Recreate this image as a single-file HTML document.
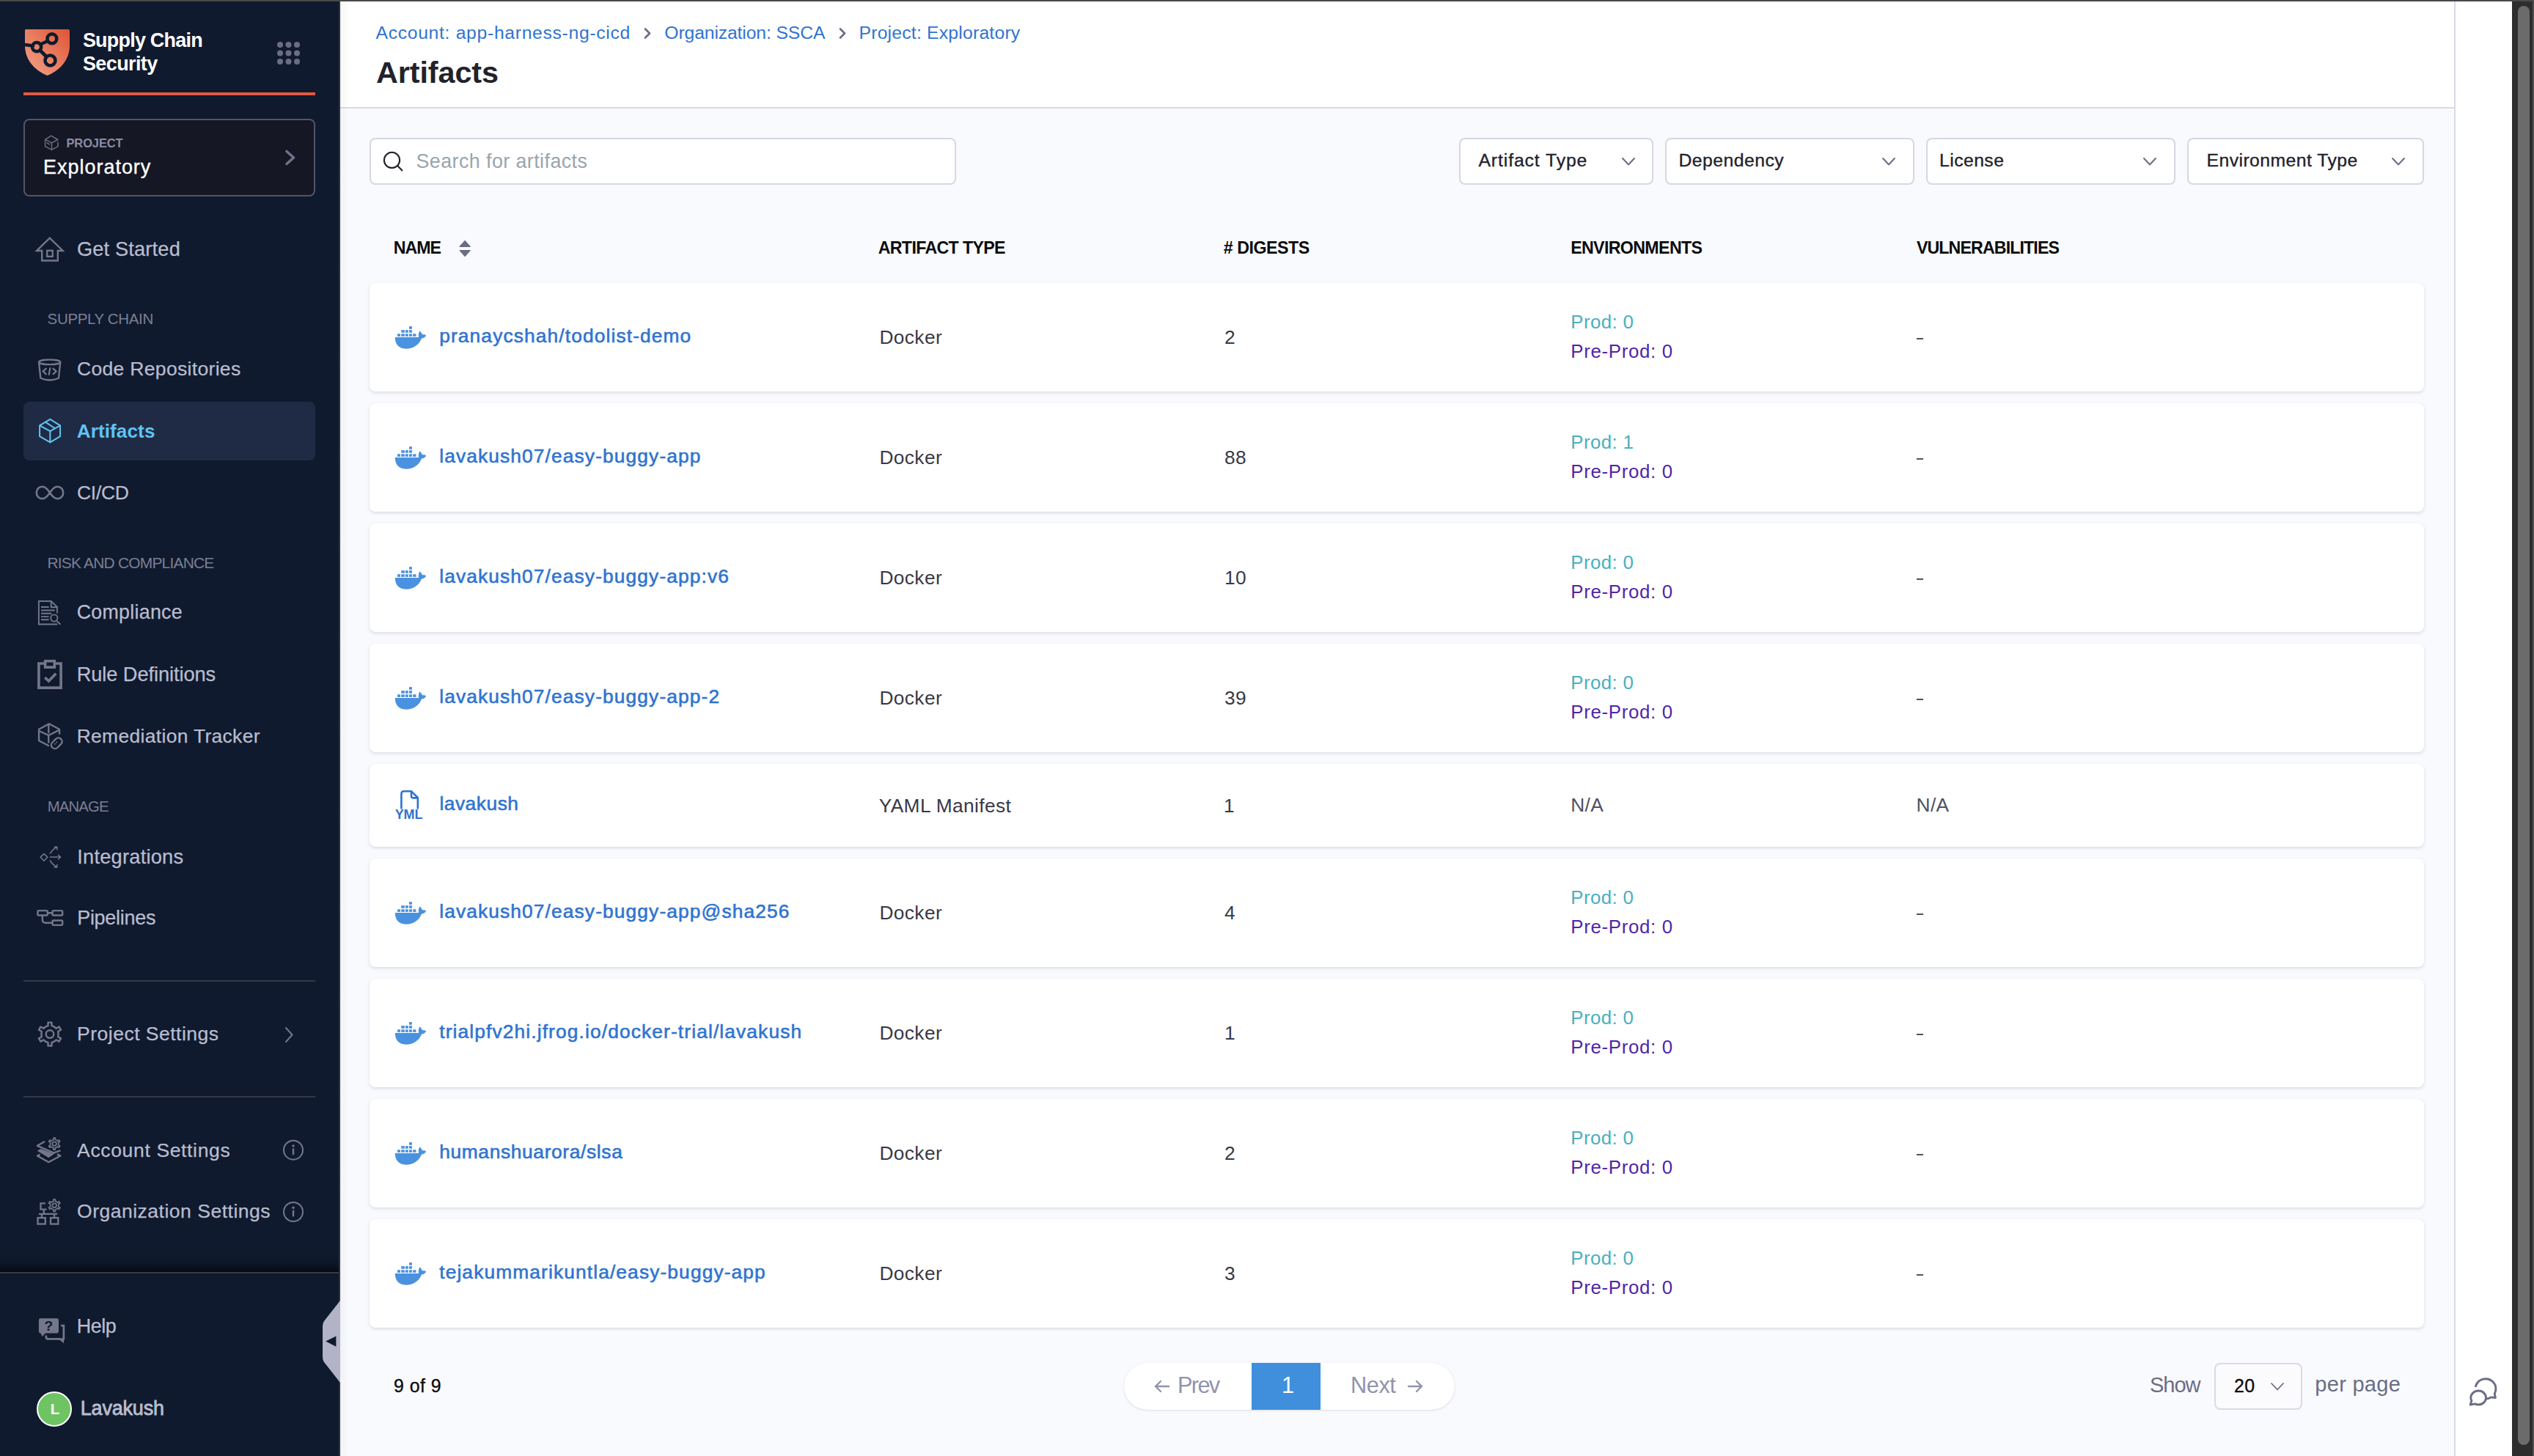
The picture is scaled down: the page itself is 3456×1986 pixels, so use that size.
<!DOCTYPE html>
<html><head><meta charset="utf-8"><title>Artifacts</title>
<style>
html,body{margin:0;padding:0;width:3456px;height:1986px;overflow:hidden;background:#f9fafe;}
body{position:relative;font-family:"Liberation Sans",sans-serif;}
.t{position:absolute;white-space:nowrap;line-height:1;}
svg{overflow:visible}
</style></head><body>
<div style="position:absolute;left:0px;top:0px;width:462px;height:1986px;background:#0f1a2e"></div>
<div style="position:absolute;left:462px;top:0px;width:2px;height:1986px;background:#30323f"></div>
<svg style="position:absolute;left:0px;top:0px;" width="120" height="120" viewBox="0 0 120 120">
<defs><linearGradient id="lg" x1="0" y1="1" x2="1" y2="0"><stop offset="0" stop-color="#f3a58c"/><stop offset="1" stop-color="#de5535"/></linearGradient></defs>
<path d="M35,40 H93 Q95,40 95,42 V62 C95,80 84,95 64.5,103 C45,95 34,80 34,62 V42 Q34,40 35,40 Z" fill="url(#lg)"/>
<g stroke="#0f1a2e" stroke-width="4.6" fill="none" stroke-linecap="round">
<line x1="30" y1="60.5" x2="45" y2="62.5"/>
<line x1="55" y1="60.5" x2="65" y2="56"/>
<line x1="54.5" y1="68.5" x2="62.5" y2="76.5"/>
<circle cx="70.9" cy="52.8" r="6.4"/>
<circle cx="50.1" cy="64.1" r="6.1"/>
<circle cx="68.5" cy="82.5" r="7"/>
</g></svg>
<div class="t" style="left:112.90px;top:42.08px;font-size:26.96px;color:#ffffff;font-weight:700;letter-spacing:-0.773px;">Supply Chain</div>
<div class="t" style="left:112.90px;top:74.08px;font-size:26.96px;color:#ffffff;font-weight:700;letter-spacing:-0.571px;">Security</div>
<svg style="position:absolute;left:0px;top:0px;" width="420" height="100" viewBox="0 0 420 100"><circle cx="382" cy="61" r="4" fill="#6b6d85"/><circle cx="382" cy="72.5" r="4" fill="#6b6d85"/><circle cx="382" cy="84" r="4" fill="#6b6d85"/><circle cx="393.5" cy="61" r="4" fill="#6b6d85"/><circle cx="393.5" cy="72.5" r="4" fill="#6b6d85"/><circle cx="393.5" cy="84" r="4" fill="#6b6d85"/><circle cx="405" cy="61" r="4" fill="#6b6d85"/><circle cx="405" cy="72.5" r="4" fill="#6b6d85"/><circle cx="405" cy="84" r="4" fill="#6b6d85"/></svg>
<div style="position:absolute;left:32px;top:126px;width:398px;height:4px;background:#e05a42"></div>
<div style="position:absolute;left:32px;top:162px;width:398px;height:106px;background:#151724;border:2px solid #53546a;border-radius:8px;box-sizing:border-box"></div>
<svg style="position:absolute;left:55px;top:180px;" width="30" height="30" viewBox="55 180 30 30"><g fill="none" stroke="#6b6d85" stroke-width="1.5" stroke-linejoin="round" stroke-linecap="round">
<path d="M78.7,190.5 L69.7,185.2 L61.6,190.3 V199.6 L70.5,204.3 L79,199.6 V193.9"/><path d="M61.6,190.3 L70.5,194.8 L78.7,190.5"/><path d="M70.5,194.8 V204.3"/><path d="M63.9,194.8 L67.4,196.9"/></g></svg>
<div class="t" style="left:90.50px;top:187.25px;font-size:16.48px;color:#8b8da6;font-weight:700;letter-spacing:-0.117px;">PROJECT</div>
<div class="t" style="left:59.00px;top:215.38px;font-size:26.96px;color:#ffffff;letter-spacing:1.000px;-webkit-text-stroke:0.35px #ffffff;">Exploratory</div>
<svg style="position:absolute;left:380px;top:200px;" width="30" height="30" viewBox="0 0 30 30"><path d="M11,6.5 L20.5,15 L11,23.5" fill="none" stroke="#70728a" stroke-width="3.6" stroke-linecap="round" stroke-linejoin="round"/></svg>
<svg style="position:absolute;left:45px;top:315px;" width="50" height="50" viewBox="0 0 1456 1456"><g fill="none" stroke="#74778c" stroke-width="68" stroke-linejoin="miter"><path d="M150,785 L665,280 L1185,785 H985 V1180 H355 V785 Z"/><rect x="560" y="780" width="220" height="235"/></g></svg>
<div class="t" style="left:104.90px;top:325.94px;font-size:27.23px;color:#b9bccf;letter-spacing:0.170px;-webkit-text-stroke:0.25px #b9bccf;">Get Started</div>
<div class="t" style="left:64.60px;top:425.42px;font-size:20.53px;color:#7c7f94;letter-spacing:-0.355px;">SUPPLY CHAIN</div>
<svg style="position:absolute;left:45px;top:480px;" width="50" height="50" viewBox="0 0 1456 1456"><g fill="none" stroke="#74778c" stroke-width="68" stroke-linecap="round" stroke-linejoin="round">
<ellipse cx="660" cy="405" rx="425" ry="95"/>
<path d="M235,405 L300,1040 Q660,1200 1020,1040 L1085,405"/>
<path d="M515,665 L400,770 L515,880"/><path d="M680,650 L635,900"/><path d="M805,665 L920,770 L805,880"/></g></svg>
<div class="t" style="left:105.00px;top:490.43px;font-size:26.54px;color:#b9bccf;letter-spacing:0.306px;-webkit-text-stroke:0.25px #b9bccf;">Code Repositories</div>
<div style="position:absolute;left:32px;top:548px;width:398px;height:80px;background:#1f2b45;border-radius:8px"></div>
<svg style="position:absolute;left:45px;top:565px;" width="50" height="50" viewBox="0 0 1456 1456"><g fill="none" stroke="#62c4f1" stroke-width="58" stroke-linejoin="round">
<path d="M680,200 L1080,445 L1080,880 L680,1120 L265,880 L265,445 Z"/>
<path d="M265,445 L680,670 L1080,445"/><path d="M680,670 L680,1120"/><path d="M480,300 L870,560"/></g></svg>
<div class="t" style="left:104.70px;top:574.59px;font-size:26.12px;color:#5fc3f2;font-weight:700;letter-spacing:0.100px;">Artifacts</div>
<svg style="position:absolute;left:40px;top:655px;" width="60" height="35" viewBox="40 655 60 35"><path d="M68,672 C64,666 60.5,663.8 57.8,663.8 C53,663.8 49.8,667.5 49.8,672 C49.8,676.5 53,680.2 57.8,680.2 C60.5,680.2 64,678 68,672 C72,666 75.5,663.8 78.2,663.8 C83,663.8 86.2,667.5 86.2,672 C86.2,676.5 83,680.2 78.2,680.2 C75.5,680.2 72,678 68,672 Z" fill="none" stroke="#74778c" stroke-width="2.6"/></svg>
<div class="t" style="left:105.00px;top:658.53px;font-size:26.54px;color:#b9bccf;letter-spacing:-0.325px;-webkit-text-stroke:0.25px #b9bccf;">CI/CD</div>
<div class="t" style="left:64.50px;top:757.76px;font-size:20.95px;color:#7c7f94;letter-spacing:-0.789px;">RISK AND COMPLIANCE</div>
<svg style="position:absolute;left:45px;top:810px;" width="50" height="50" viewBox="0 0 1456 1456"><g fill="none" stroke="#74778c" stroke-width="55">
<path d="M960,770 V520 L720,290 H230 V1210 H970"/><path d="M720,290 V530 H960"/>
<path d="M320,525 H630 M320,655 H870 M320,780 H740 M320,905 H630 M320,1025 H630"/>
<circle cx="840" cy="960" r="135"/><path d="M945,1085 L1095,1215"/></g></svg>
<div class="t" style="left:104.70px;top:822.10px;font-size:26.82px;color:#b9bccf;letter-spacing:0.267px;-webkit-text-stroke:0.25px #b9bccf;">Compliance</div>
<svg style="position:absolute;left:45px;top:895px;" width="50" height="50" viewBox="0 0 1456 1456"><g fill="none" stroke="#74778c" stroke-width="105">
<path d="M435,290 H230 V1255 H1110 V290 H905"/><rect x="485" y="195" width="370" height="245"/>
<path d="M475,850 L625,990 L910,690"/></g></svg>
<div class="t" style="left:104.70px;top:905.74px;font-size:27.23px;color:#b9bccf;letter-spacing:-0.080px;-webkit-text-stroke:0.25px #b9bccf;">Rule Definitions</div>
<svg style="position:absolute;left:45px;top:980px;" width="50" height="50" viewBox="0 0 1456 1456"><g fill="none" stroke="#74778c" stroke-width="68" stroke-linejoin="round">
<path d="M1050,630 V430 L640,210 L235,430 V880 L640,1090"/><path d="M270,510 L620,670 L1020,470"/>
<path d="M620,680 V980"/><path d="M620,230 V590"/>
<rect x="700" y="840" width="480" height="290" rx="140" transform="rotate(-45 940 985)"/></g>
<g fill="#74778c"><circle cx="870" cy="1010" r="30"/><circle cx="940" cy="945" r="30"/></g></svg>
<div class="t" style="left:104.70px;top:990.55px;font-size:26.40px;color:#b9bccf;letter-spacing:0.350px;-webkit-text-stroke:0.25px #b9bccf;">Remediation Tracker</div>
<div class="t" style="left:64.80px;top:1089.53px;font-size:20.39px;color:#7c7f94;letter-spacing:-0.920px;">MANAGE</div>
<svg style="position:absolute;left:40px;top:1145px;" width="50" height="45" viewBox="40 1145 50 45"><g fill="none" stroke="#74778c" stroke-width="1.5" stroke-linecap="round" stroke-linejoin="round">
<path d="M59.9,1164.6 L64.9,1169.1 L59.9,1174.3 L55.1,1169.1 Z"/>
<path d="M68.4,1169.1 H82.6 M79.4,1166.2 L82.6,1169.1 L79.4,1172"/>
<path d="M68.4,1164.2 Q71.5,1159 77.8,1155.2 M74.2,1155.2 H77.8 V1158.8"/>
<path d="M68.4,1174 Q71.5,1179.2 77.8,1183 M74.2,1183 H77.8 V1179.4"/></g></svg>
<div class="t" style="left:105.20px;top:1154.94px;font-size:27.23px;color:#b9bccf;letter-spacing:0.245px;-webkit-text-stroke:0.25px #b9bccf;">Integrations</div>
<svg style="position:absolute;left:40px;top:1230px;" width="55" height="40" viewBox="40 1230 55 40"><g fill="none" stroke="#74778c" stroke-width="2.4" stroke-linejoin="round">
<rect x="51.4" y="1242.1" width="13.4" height="6.4" rx="1.3"/><rect x="71.6" y="1242.1" width="13.6" height="6.4" rx="1.3"/>
<rect x="71.6" y="1255.5" width="13.6" height="6.4" rx="1.3"/><path d="M64.8,1245.3 H71.6 M57.9,1248.5 V1254.8 Q57.9,1258.7 61.8,1258.7 H71.6"/></g></svg>
<div class="t" style="left:105.20px;top:1239.18px;font-size:26.96px;color:#b9bccf;letter-spacing:-0.275px;-webkit-text-stroke:0.25px #b9bccf;">Pipelines</div>
<div style="position:absolute;left:32px;top:1337px;width:398px;height:2px;background:#353849"></div>
<svg style="position:absolute;left:45px;top:1385px;" width="50" height="50" viewBox="0 0 1456 1456"><g fill="none" stroke="#74778c" stroke-width="70" stroke-linejoin="round"><path d="M500.0,450.6 L599.3,412.4 L596.5,280.8 L743.5,280.8 L740.7,412.4 L840.0,450.6 L922.7,517.5 L1035.3,449.2 L1108.8,576.6 L993.4,639.9 L1010.0,745.0 L993.4,850.1 L1108.8,913.4 L1035.3,1040.8 L922.7,972.5 L840.0,1039.4 L740.7,1077.6 L743.5,1209.2 L596.5,1209.2 L599.3,1077.6 L500.0,1039.4 L417.3,972.5 L304.7,1040.8 L231.2,913.4 L346.6,850.1 L330.0,745.0 L346.6,639.9 L231.2,576.6 L304.7,449.2 L417.3,517.5Z"/><circle cx="670" cy="745" r="155"/></g></svg>
<div class="t" style="left:105.10px;top:1397.43px;font-size:26.54px;color:#b9bccf;letter-spacing:0.473px;-webkit-text-stroke:0.25px #b9bccf;">Project Settings</div>
<svg style="position:absolute;left:380px;top:1395px;" width="30" height="30" viewBox="0 0 30 30"><path d="M10,7 L18.5,16.5 L10,26" fill="none" stroke="#74778c" stroke-width="2" stroke-linecap="round" stroke-linejoin="round"/></svg>
<div style="position:absolute;left:32px;top:1495px;width:398px;height:2px;background:#353849"></div>
<svg style="position:absolute;left:45px;top:1545px;" width="50" height="50" viewBox="0 0 1456 1456"><g fill="none" stroke="#74778c" stroke-width="68" stroke-linejoin="round">
<path d="M470,350 L170,520 L830,800 L1090,710"/><path d="M280,870 L170,920 L620,1170 L1090,920 L960,855"/>
<path d="M767.5,297.1 L815.7,278.6 L813.2,207.9 L886.8,207.9 L884.3,278.6 L932.5,297.1 L972.6,329.6 L1032.6,292.1 L1069.4,355.8 L1006.9,389.0 L1015.0,440.0 L1006.9,491.0 L1069.4,524.2 L1032.6,587.9 L972.6,550.4 L932.5,582.9 L884.3,601.4 L886.8,672.1 L813.2,672.1 L815.7,601.4 L767.5,582.9 L727.4,550.4 L667.4,587.9 L630.6,524.2 L693.1,491.0 L685.0,440.0 L693.1,389.0 L630.6,355.8 L667.4,292.1 L727.4,329.6Z" stroke-width="50"/><circle cx="850" cy="440" r="80" stroke-width="50"/></g>
<path d="M170,720 L300,640 L830,830 L960,760 L620,1000 Z" fill="#74778c"/></svg>
<div class="t" style="left:105.10px;top:1555.83px;font-size:26.54px;color:#b9bccf;letter-spacing:0.633px;-webkit-text-stroke:0.25px #b9bccf;">Account Settings</div>
<svg style="position:absolute;left:45px;top:1628px;" width="50" height="50" viewBox="0 0 1456 1456"><g fill="none" stroke="#74778c" stroke-width="68">
<path d="M490,390 H305 V630 H540"/><path d="M430,650 V810 M230,810 H965 M350,810 V960 M845,810 V960"/>
<rect x="190" y="965" width="300" height="245"/><rect x="700" y="965" width="300" height="245"/>
<path d="M765.0,322.8 L814.7,303.7 L812.5,233.0 L887.5,233.0 L885.3,303.7 L935.0,322.8 L976.3,356.2 L1036.5,319.0 L1074.1,384.0 L1011.7,417.5 L1020.0,470.0 L1011.7,522.5 L1074.1,556.0 L1036.5,621.0 L976.3,583.8 L935.0,617.2 L885.3,636.3 L887.5,707.0 L812.5,707.0 L814.7,636.3 L765.0,617.2 L723.7,583.8 L663.5,621.0 L625.9,556.0 L688.3,522.5 L680.0,470.0 L688.3,417.5 L625.9,384.0 L663.5,319.0 L723.7,356.2Z" stroke-width="50"/><circle cx="850" cy="470" r="82" stroke-width="50"/></g></svg>
<div class="t" style="left:105.00px;top:1639.33px;font-size:26.54px;color:#b9bccf;letter-spacing:0.495px;-webkit-text-stroke:0.25px #b9bccf;">Organization Settings</div>
<svg style="position:absolute;left:380px;top:1548px;" width="40" height="40" viewBox="0 0 40 40"><g transform="translate(0,0.70)"><circle cx="20" cy="20" r="13" fill="none" stroke="#74778c" stroke-width="2"/><circle cx="20" cy="14.3" r="1.7" fill="#74778c"/><rect x="18.8" y="17.5" width="2.4" height="9" rx="1" fill="#74778c"/></g></svg>
<svg style="position:absolute;left:380px;top:1633px;" width="40" height="40" viewBox="0 0 40 40"><g transform="translate(0,0.00)"><circle cx="20" cy="20" r="13" fill="none" stroke="#74778c" stroke-width="2"/><circle cx="20" cy="14.3" r="1.7" fill="#74778c"/><rect x="18.8" y="17.5" width="2.4" height="9" rx="1" fill="#74778c"/></g></svg>
<div style="position:absolute;left:0px;top:1712px;width:462px;height:24px;background:linear-gradient(to bottom, rgba(0,0,0,0) 0%, rgba(0,0,0,0.12) 45%, rgba(0,0,0,0.45) 80%, rgba(0,0,0,0.7) 100%)"></div>
<div style="position:absolute;left:0px;top:1735px;width:462px;height:2px;background:#3a3b48"></div>
<svg style="position:absolute;left:45px;top:1790px;" width="50" height="50" viewBox="0 0 1456 1456"><path d="M300,240 H940 Q1020,240 1020,320 V740 Q1020,830 930,830 H500 L360,960 L310,840 Q230,820 230,740 V320 Q230,240 300,240 Z" fill="#74778c"/>
<path d="M1110,530 H1220 V1050 H1185 V1150 L1080,1060 H600 Q520,1060 520,980 V920" fill="none" stroke="#74778c" stroke-width="80"/>
<text x="625" y="725" font-family="Liberation Sans" font-weight="700" font-size="560" text-anchor="middle" fill="#0f1a2e">?</text></svg>
<div class="t" style="left:104.70px;top:1796.28px;font-size:26.96px;color:#b9bccf;letter-spacing:-0.500px;-webkit-text-stroke:0.25px #b9bccf;">Help</div>
<svg style="position:absolute;left:438px;top:1772px;" width="28" height="116" viewBox="0 0 28 116"><path d="M26,2 L26,114 L4,86 Q2,83 2,79 L2,37 Q2,33 4,30 Z" fill="#b2b3c6"/><path d="M6.2,57.5 L20.4,50.5 V64.8 Z" fill="#0f1a2e"/></svg>
<div style="position:absolute;left:49.8px;top:1897.8px;width:48.2px;height:48.2px;background:#6ec463;border:2.2px solid #ffffff;border-radius:50%;box-sizing:border-box"></div>
<div class="t" style="left:68.70px;top:1911.52px;font-size:20.53px;color:#ffffff;font-weight:700;">L</div>
<div class="t" style="left:109.80px;top:1908.08px;font-size:26.96px;color:#b9bccf;letter-spacing:-0.171px;-webkit-text-stroke:0.8px #b9bccf;">Lavakush</div>
<div style="position:absolute;left:464px;top:0px;width:2883px;height:1986px;background:#f9fafe"></div>
<div style="position:absolute;left:464px;top:0px;width:2883px;height:146px;background:#ffffff"></div>
<div style="position:absolute;left:464px;top:146px;width:2883px;height:2px;background:#d9dae5"></div>
<div style="position:absolute;left:464px;top:0px;width:12px;height:1986px;background:linear-gradient(to right, rgba(0,0,0,0.035), rgba(0,0,0,0))"></div>
<div style="position:absolute;left:3347px;top:0px;width:2px;height:1986px;background:#d9dae5"></div>
<div style="position:absolute;left:3349px;top:0px;width:77px;height:1986px;background:#ffffff"></div>
<svg style="position:absolute;left:3358px;top:1874px;" width="56" height="56" viewBox="0 0 50 50"><g fill="none" stroke="#6b6d85" stroke-width="2.6" stroke-linecap="round" stroke-linejoin="round">
<path d="M16.5,15 C18,9.5 23,6 28.5,6 C35.5,6 41,11.5 41,18 C41,20.5 40.5,22.5 39.5,24 L40.5,29 L35,28.5 C33.5,29.5 32,30 30.5,30.3"/>
<path d="M20,20.5 C25,20.5 29,24.5 29,29 C29,33.5 25,37.5 20,37.5 C18.5,37.5 17,37.2 15.8,36.5 L10,37.5 L11.5,32.5 C10.8,31.5 10.5,30 10.5,29 C10.5,24.5 14.8,20.5 20,20.5 Z"/></g></svg>
<div style="position:absolute;left:3426px;top:2px;width:30px;height:1984px;background:#2d2d2d"></div>
<div style="position:absolute;left:3454px;top:2px;width:2px;height:1984px;background:#4f4f4f"></div>
<div style="position:absolute;left:3434px;top:8px;width:16px;height:1963px;background:#6b6b6b;border-radius:8px"></div>
<div style="position:absolute;left:0px;top:0px;width:3456px;height:2px;background:#484a48"></div>
<div class="t" style="left:512.50px;top:32.97px;font-size:24.72px;color:#2f74d0;letter-spacing:0.681px;">Account: app-harness-ng-cicd</div>
<div class="t" style="left:906.30px;top:32.87px;font-size:24.72px;color:#2f74d0;letter-spacing:-0.124px;">Organization: SSCA</div>
<div class="t" style="left:1171.50px;top:32.87px;font-size:24.72px;color:#2f74d0;letter-spacing:0.211px;">Project: Exploratory</div>
<svg style="position:absolute;left:875.7px;top:35px;" width="16" height="22" viewBox="0 0 16 22"><path d="M4,4.5 L10,10.5 L4,16.5" fill="none" stroke="#6b6d85" stroke-width="2.6" stroke-linecap="round" stroke-linejoin="round"/></svg>
<svg style="position:absolute;left:1141.5px;top:35px;" width="16" height="22" viewBox="0 0 16 22"><path d="M4,4.5 L10,10.5 L4,16.5" fill="none" stroke="#6b6d85" stroke-width="2.6" stroke-linecap="round" stroke-linejoin="round"/></svg>
<div class="t" style="left:512.90px;top:78.90px;font-size:41.34px;color:#22222a;font-weight:700;letter-spacing:-0.062px;">Artifacts</div>
<div style="position:absolute;left:504px;top:188px;width:800px;height:64px;background:#ffffff;border:2px solid #d6d7e1;border-radius:8px;box-sizing:border-box"></div>
<svg style="position:absolute;left:515px;top:200px;" width="40" height="40" viewBox="0 0 40 40"><circle cx="19.5" cy="18.4" r="10.6" fill="none" stroke="#22222a" stroke-width="2.1"/><path d="M27.6,26.6 L33.4,32.4" stroke="#22222a" stroke-width="2.1" stroke-linecap="round"/></svg>
<div class="t" style="left:567.50px;top:207.40px;font-size:26.82px;color:#9aa4ae;letter-spacing:0.442px;">Search for artifacts</div>
<div style="position:absolute;left:1990px;top:188px;width:265px;height:64px;background:#ffffff;border:2px solid #d6d7e1;border-radius:8px;box-sizing:border-box"></div>
<div class="t" style="left:2016.40px;top:207.07px;font-size:24.72px;color:#22222a;letter-spacing:0.917px;-webkit-text-stroke:0.35px #22222a;">Artifact Type</div>
<svg style="position:absolute;left:2209px;top:211.5px;" width="24" height="16.5" viewBox="0 0 24 16.5"><path d="M4,4 L12.0,12.5 L20,4" fill="none" stroke="#6b6d85" stroke-width="2" stroke-linecap="round" stroke-linejoin="round"/></svg>
<div style="position:absolute;left:2271px;top:188px;width:340px;height:64px;background:#ffffff;border:2px solid #d6d7e1;border-radius:8px;box-sizing:border-box"></div>
<div class="t" style="left:2289.50px;top:207.07px;font-size:24.72px;color:#22222a;letter-spacing:0.478px;-webkit-text-stroke:0.35px #22222a;">Dependency</div>
<svg style="position:absolute;left:2564px;top:211.5px;" width="24" height="16.5" viewBox="0 0 24 16.5"><path d="M4,4 L12.0,12.5 L20,4" fill="none" stroke="#6b6d85" stroke-width="2" stroke-linecap="round" stroke-linejoin="round"/></svg>
<div style="position:absolute;left:2627px;top:188px;width:340px;height:64px;background:#ffffff;border:2px solid #d6d7e1;border-radius:8px;box-sizing:border-box"></div>
<div class="t" style="left:2645.00px;top:207.07px;font-size:24.72px;color:#22222a;letter-spacing:0.450px;-webkit-text-stroke:0.35px #22222a;">License</div>
<svg style="position:absolute;left:2920px;top:211.5px;" width="24" height="16.5" viewBox="0 0 24 16.5"><path d="M4,4 L12.0,12.5 L20,4" fill="none" stroke="#6b6d85" stroke-width="2" stroke-linecap="round" stroke-linejoin="round"/></svg>
<div style="position:absolute;left:2983px;top:188px;width:323px;height:64px;background:#ffffff;border:2px solid #d6d7e1;border-radius:8px;box-sizing:border-box"></div>
<div class="t" style="left:3009.50px;top:207.07px;font-size:24.72px;color:#22222a;letter-spacing:0.460px;-webkit-text-stroke:0.35px #22222a;">Environment Type</div>
<svg style="position:absolute;left:3259px;top:211.5px;" width="24" height="16.5" viewBox="0 0 24 16.5"><path d="M4,4 L12.0,12.5 L20,4" fill="none" stroke="#6b6d85" stroke-width="2" stroke-linecap="round" stroke-linejoin="round"/></svg>
<div class="t" style="left:536.80px;top:327.37px;font-size:23.18px;color:#0b0b0d;font-weight:700;letter-spacing:-1.033px;">NAME</div>
<svg style="position:absolute;left:620px;top:322px;" width="30" height="34" viewBox="620 322 30 34"><path d="M627.2,336.2 L634.1,328.6 L641,336.2 Z M627.2,341.6 L634.1,349.4 L641,341.6 Z" fill="#6b6d85" stroke="#6b6d85" stroke-width="1.4" stroke-linejoin="round"/></svg>
<div class="t" style="left:1197.70px;top:327.37px;font-size:23.18px;color:#0b0b0d;font-weight:700;letter-spacing:-0.642px;">ARTIFACT TYPE</div>
<div class="t" style="left:1668.80px;top:327.37px;font-size:23.18px;color:#0b0b0d;font-weight:700;letter-spacing:-0.450px;"># DIGESTS</div>
<div class="t" style="left:2142.20px;top:327.37px;font-size:23.18px;color:#0b0b0d;font-weight:700;letter-spacing:-0.627px;">ENVIRONMENTS</div>
<div class="t" style="left:2613.90px;top:327.37px;font-size:23.18px;color:#0b0b0d;font-weight:700;letter-spacing:-0.871px;">VULNERABILITIES</div>
<div style="position:absolute;left:504px;top:386px;width:2802px;height:148px;background:#ffffff;border-radius:8px;box-shadow:0 2px 4px rgba(96,97,112,0.18), 0 0 1px rgba(40,41,61,0.06)"></div>
<svg style="position:absolute;left:535px;top:440px;" width="50" height="50" viewBox="0 0 1456 1456"><g fill="#4a92e0"><rect x="205" y="445" width="115" height="105"/><rect x="355" y="445" width="135" height="105"/><rect x="520" y="445" width="115" height="105"/><rect x="670" y="445" width="115" height="105"/><rect x="820" y="445" width="125" height="105"/><rect x="355" y="295" width="135" height="105"/><rect x="520" y="295" width="115" height="105"/><rect x="670" y="295" width="115" height="105"/><rect x="670" y="150" width="115" height="105"/><path d="M110,585 H1050 C1040,520 1030,430 1090,330 C1140,380 1180,440 1195,475 C1260,465 1320,480 1345,505 C1310,590 1230,630 1160,635 C1070,880 850,1040 540,1040 C250,1040 110,850 110,585 Z"/></g></svg>
<div class="t" style="left:599.20px;top:445.03px;font-size:26.30px;color:#2f74d0;letter-spacing:1.138px;-webkit-text-stroke:0.6px #2f74d0;">pranaycshah/todolist-demo</div>
<div class="t" style="left:1199.40px;top:446.73px;font-size:26.30px;color:#383946;letter-spacing:0.400px;">Docker</div>
<div class="t" style="left:1670.00px;top:446.73px;font-size:26.30px;color:#383946;letter-spacing:0.400px;">2</div>
<div class="t" style="left:2142.30px;top:427.06px;font-size:25.80px;color:#4aafc0;letter-spacing:0.400px;">Prod: 0</div>
<div class="t" style="left:2142.30px;top:467.06px;font-size:25.80px;color:#5026a8;letter-spacing:0.680px;">Pre-Prod: 0</div>
<div style="position:absolute;left:2614px;top:460.6px;width:9px;height:2.6px;background:#4f5162"></div>
<div style="position:absolute;left:504px;top:550px;width:2802px;height:148px;background:#ffffff;border-radius:8px;box-shadow:0 2px 4px rgba(96,97,112,0.18), 0 0 1px rgba(40,41,61,0.06)"></div>
<svg style="position:absolute;left:535px;top:604px;" width="50" height="50" viewBox="0 0 1456 1456"><g fill="#4a92e0"><rect x="205" y="445" width="115" height="105"/><rect x="355" y="445" width="135" height="105"/><rect x="520" y="445" width="115" height="105"/><rect x="670" y="445" width="115" height="105"/><rect x="820" y="445" width="125" height="105"/><rect x="355" y="295" width="135" height="105"/><rect x="520" y="295" width="115" height="105"/><rect x="670" y="295" width="115" height="105"/><rect x="670" y="150" width="115" height="105"/><path d="M110,585 H1050 C1040,520 1030,430 1090,330 C1140,380 1180,440 1195,475 C1260,465 1320,480 1345,505 C1310,590 1230,630 1160,635 C1070,880 850,1040 540,1040 C250,1040 110,850 110,585 Z"/></g></svg>
<div class="t" style="left:599.20px;top:609.03px;font-size:26.30px;color:#2f74d0;letter-spacing:1.138px;-webkit-text-stroke:0.6px #2f74d0;">lavakush07/easy-buggy-app</div>
<div class="t" style="left:1199.40px;top:610.73px;font-size:26.30px;color:#383946;letter-spacing:0.400px;">Docker</div>
<div class="t" style="left:1670.00px;top:610.73px;font-size:26.30px;color:#383946;letter-spacing:0.400px;">88</div>
<div class="t" style="left:2142.30px;top:591.06px;font-size:25.80px;color:#4aafc0;letter-spacing:0.400px;">Prod: 1</div>
<div class="t" style="left:2142.30px;top:631.06px;font-size:25.80px;color:#5026a8;letter-spacing:0.680px;">Pre-Prod: 0</div>
<div style="position:absolute;left:2614px;top:624.6px;width:9px;height:2.6px;background:#4f5162"></div>
<div style="position:absolute;left:504px;top:714px;width:2802px;height:148px;background:#ffffff;border-radius:8px;box-shadow:0 2px 4px rgba(96,97,112,0.18), 0 0 1px rgba(40,41,61,0.06)"></div>
<svg style="position:absolute;left:535px;top:768px;" width="50" height="50" viewBox="0 0 1456 1456"><g fill="#4a92e0"><rect x="205" y="445" width="115" height="105"/><rect x="355" y="445" width="135" height="105"/><rect x="520" y="445" width="115" height="105"/><rect x="670" y="445" width="115" height="105"/><rect x="820" y="445" width="125" height="105"/><rect x="355" y="295" width="135" height="105"/><rect x="520" y="295" width="115" height="105"/><rect x="670" y="295" width="115" height="105"/><rect x="670" y="150" width="115" height="105"/><path d="M110,585 H1050 C1040,520 1030,430 1090,330 C1140,380 1180,440 1195,475 C1260,465 1320,480 1345,505 C1310,590 1230,630 1160,635 C1070,880 850,1040 540,1040 C250,1040 110,850 110,585 Z"/></g></svg>
<div class="t" style="left:599.20px;top:773.03px;font-size:26.30px;color:#2f74d0;letter-spacing:1.138px;-webkit-text-stroke:0.6px #2f74d0;">lavakush07/easy-buggy-app:v6</div>
<div class="t" style="left:1199.40px;top:774.73px;font-size:26.30px;color:#383946;letter-spacing:0.400px;">Docker</div>
<div class="t" style="left:1670.00px;top:774.73px;font-size:26.30px;color:#383946;letter-spacing:0.400px;">10</div>
<div class="t" style="left:2142.30px;top:755.06px;font-size:25.80px;color:#4aafc0;letter-spacing:0.400px;">Prod: 0</div>
<div class="t" style="left:2142.30px;top:795.06px;font-size:25.80px;color:#5026a8;letter-spacing:0.680px;">Pre-Prod: 0</div>
<div style="position:absolute;left:2614px;top:788.6px;width:9px;height:2.6px;background:#4f5162"></div>
<div style="position:absolute;left:504px;top:878px;width:2802px;height:148px;background:#ffffff;border-radius:8px;box-shadow:0 2px 4px rgba(96,97,112,0.18), 0 0 1px rgba(40,41,61,0.06)"></div>
<svg style="position:absolute;left:535px;top:932px;" width="50" height="50" viewBox="0 0 1456 1456"><g fill="#4a92e0"><rect x="205" y="445" width="115" height="105"/><rect x="355" y="445" width="135" height="105"/><rect x="520" y="445" width="115" height="105"/><rect x="670" y="445" width="115" height="105"/><rect x="820" y="445" width="125" height="105"/><rect x="355" y="295" width="135" height="105"/><rect x="520" y="295" width="115" height="105"/><rect x="670" y="295" width="115" height="105"/><rect x="670" y="150" width="115" height="105"/><path d="M110,585 H1050 C1040,520 1030,430 1090,330 C1140,380 1180,440 1195,475 C1260,465 1320,480 1345,505 C1310,590 1230,630 1160,635 C1070,880 850,1040 540,1040 C250,1040 110,850 110,585 Z"/></g></svg>
<div class="t" style="left:599.20px;top:937.03px;font-size:26.30px;color:#2f74d0;letter-spacing:1.138px;-webkit-text-stroke:0.6px #2f74d0;">lavakush07/easy-buggy-app-2</div>
<div class="t" style="left:1199.40px;top:938.73px;font-size:26.30px;color:#383946;letter-spacing:0.400px;">Docker</div>
<div class="t" style="left:1670.00px;top:938.73px;font-size:26.30px;color:#383946;letter-spacing:0.400px;">39</div>
<div class="t" style="left:2142.30px;top:919.06px;font-size:25.80px;color:#4aafc0;letter-spacing:0.400px;">Prod: 0</div>
<div class="t" style="left:2142.30px;top:959.06px;font-size:25.80px;color:#5026a8;letter-spacing:0.680px;">Pre-Prod: 0</div>
<div style="position:absolute;left:2614px;top:952.6px;width:9px;height:2.6px;background:#4f5162"></div>
<div style="position:absolute;left:504px;top:1042px;width:2802px;height:113px;background:#ffffff;border-radius:8px;box-shadow:0 2px 4px rgba(96,97,112,0.18), 0 0 1px rgba(40,41,61,0.06)"></div>
<svg style="position:absolute;left:530px;top:1070px;" width="60" height="56" viewBox="0 0 60 56"><g fill="none" stroke="#2f74d0" stroke-width="2.6" stroke-linecap="round" stroke-linejoin="round">
<path d="M17.4,32.5 V13 Q17.4,9.3 21,9.3 H31 L39.8,18 V32.5"/><path d="M31,9.6 V16 Q31,18.4 33.4,18.4 H39.6"/></g>
<text x="27.5" y="46.8" font-family="Liberation Sans" font-weight="700" font-size="18" text-anchor="middle" fill="#2f74d0" letter-spacing="-0.2">YML</text></svg>
<div class="t" style="left:599.40px;top:1082.73px;font-size:26.30px;color:#2f74d0;letter-spacing:0.538px;-webkit-text-stroke:0.6px #2f74d0;">lavakush</div>
<div class="t" style="left:1198.70px;top:1085.93px;font-size:26.30px;color:#383946;letter-spacing:0.400px;">YAML Manifest</div>
<div class="t" style="left:1669.00px;top:1085.73px;font-size:26.30px;color:#383946;">1</div>
<div class="t" style="left:2142.20px;top:1085.33px;font-size:26.30px;color:#4f5162;letter-spacing:0.400px;">N/A</div>
<div class="t" style="left:2613.50px;top:1085.33px;font-size:26.30px;color:#4f5162;letter-spacing:0.400px;">N/A</div>
<div style="position:absolute;left:504px;top:1171px;width:2802px;height:148px;background:#ffffff;border-radius:8px;box-shadow:0 2px 4px rgba(96,97,112,0.18), 0 0 1px rgba(40,41,61,0.06)"></div>
<svg style="position:absolute;left:535px;top:1225px;" width="50" height="50" viewBox="0 0 1456 1456"><g fill="#4a92e0"><rect x="205" y="445" width="115" height="105"/><rect x="355" y="445" width="135" height="105"/><rect x="520" y="445" width="115" height="105"/><rect x="670" y="445" width="115" height="105"/><rect x="820" y="445" width="125" height="105"/><rect x="355" y="295" width="135" height="105"/><rect x="520" y="295" width="115" height="105"/><rect x="670" y="295" width="115" height="105"/><rect x="670" y="150" width="115" height="105"/><path d="M110,585 H1050 C1040,520 1030,430 1090,330 C1140,380 1180,440 1195,475 C1260,465 1320,480 1345,505 C1310,590 1230,630 1160,635 C1070,880 850,1040 540,1040 C250,1040 110,850 110,585 Z"/></g></svg>
<div class="t" style="left:599.20px;top:1230.03px;font-size:26.30px;color:#2f74d0;letter-spacing:1.138px;-webkit-text-stroke:0.6px #2f74d0;">lavakush07/easy-buggy-app@sha256</div>
<div class="t" style="left:1199.40px;top:1231.73px;font-size:26.30px;color:#383946;letter-spacing:0.400px;">Docker</div>
<div class="t" style="left:1670.00px;top:1231.73px;font-size:26.30px;color:#383946;letter-spacing:0.400px;">4</div>
<div class="t" style="left:2142.30px;top:1212.06px;font-size:25.80px;color:#4aafc0;letter-spacing:0.400px;">Prod: 0</div>
<div class="t" style="left:2142.30px;top:1252.06px;font-size:25.80px;color:#5026a8;letter-spacing:0.680px;">Pre-Prod: 0</div>
<div style="position:absolute;left:2614px;top:1245.6px;width:9px;height:2.6px;background:#4f5162"></div>
<div style="position:absolute;left:504px;top:1335px;width:2802px;height:148px;background:#ffffff;border-radius:8px;box-shadow:0 2px 4px rgba(96,97,112,0.18), 0 0 1px rgba(40,41,61,0.06)"></div>
<svg style="position:absolute;left:535px;top:1389px;" width="50" height="50" viewBox="0 0 1456 1456"><g fill="#4a92e0"><rect x="205" y="445" width="115" height="105"/><rect x="355" y="445" width="135" height="105"/><rect x="520" y="445" width="115" height="105"/><rect x="670" y="445" width="115" height="105"/><rect x="820" y="445" width="125" height="105"/><rect x="355" y="295" width="135" height="105"/><rect x="520" y="295" width="115" height="105"/><rect x="670" y="295" width="115" height="105"/><rect x="670" y="150" width="115" height="105"/><path d="M110,585 H1050 C1040,520 1030,430 1090,330 C1140,380 1180,440 1195,475 C1260,465 1320,480 1345,505 C1310,590 1230,630 1160,635 C1070,880 850,1040 540,1040 C250,1040 110,850 110,585 Z"/></g></svg>
<div class="t" style="left:599.20px;top:1394.03px;font-size:26.30px;color:#2f74d0;letter-spacing:1.138px;-webkit-text-stroke:0.6px #2f74d0;">trialpfv2hi.jfrog.io/docker-trial/lavakush</div>
<div class="t" style="left:1199.40px;top:1395.73px;font-size:26.30px;color:#383946;letter-spacing:0.400px;">Docker</div>
<div class="t" style="left:1670.00px;top:1395.73px;font-size:26.30px;color:#383946;letter-spacing:0.400px;">1</div>
<div class="t" style="left:2142.30px;top:1376.06px;font-size:25.80px;color:#4aafc0;letter-spacing:0.400px;">Prod: 0</div>
<div class="t" style="left:2142.30px;top:1416.06px;font-size:25.80px;color:#5026a8;letter-spacing:0.680px;">Pre-Prod: 0</div>
<div style="position:absolute;left:2614px;top:1409.6px;width:9px;height:2.6px;background:#4f5162"></div>
<div style="position:absolute;left:504px;top:1499px;width:2802px;height:148px;background:#ffffff;border-radius:8px;box-shadow:0 2px 4px rgba(96,97,112,0.18), 0 0 1px rgba(40,41,61,0.06)"></div>
<svg style="position:absolute;left:535px;top:1553px;" width="50" height="50" viewBox="0 0 1456 1456"><g fill="#4a92e0"><rect x="205" y="445" width="115" height="105"/><rect x="355" y="445" width="135" height="105"/><rect x="520" y="445" width="115" height="105"/><rect x="670" y="445" width="115" height="105"/><rect x="820" y="445" width="125" height="105"/><rect x="355" y="295" width="135" height="105"/><rect x="520" y="295" width="115" height="105"/><rect x="670" y="295" width="115" height="105"/><rect x="670" y="150" width="115" height="105"/><path d="M110,585 H1050 C1040,520 1030,430 1090,330 C1140,380 1180,440 1195,475 C1260,465 1320,480 1345,505 C1310,590 1230,630 1160,635 C1070,880 850,1040 540,1040 C250,1040 110,850 110,585 Z"/></g></svg>
<div class="t" style="left:599.20px;top:1558.03px;font-size:26.30px;color:#2f74d0;letter-spacing:0.668px;-webkit-text-stroke:0.6px #2f74d0;">humanshuarora/slsa</div>
<div class="t" style="left:1199.40px;top:1559.73px;font-size:26.30px;color:#383946;letter-spacing:0.400px;">Docker</div>
<div class="t" style="left:1670.00px;top:1559.73px;font-size:26.30px;color:#383946;letter-spacing:0.400px;">2</div>
<div class="t" style="left:2142.30px;top:1540.06px;font-size:25.80px;color:#4aafc0;letter-spacing:0.400px;">Prod: 0</div>
<div class="t" style="left:2142.30px;top:1580.06px;font-size:25.80px;color:#5026a8;letter-spacing:0.680px;">Pre-Prod: 0</div>
<div style="position:absolute;left:2614px;top:1573.6px;width:9px;height:2.6px;background:#4f5162"></div>
<div style="position:absolute;left:504px;top:1663px;width:2802px;height:148px;background:#ffffff;border-radius:8px;box-shadow:0 2px 4px rgba(96,97,112,0.18), 0 0 1px rgba(40,41,61,0.06)"></div>
<svg style="position:absolute;left:535px;top:1717px;" width="50" height="50" viewBox="0 0 1456 1456"><g fill="#4a92e0"><rect x="205" y="445" width="115" height="105"/><rect x="355" y="445" width="135" height="105"/><rect x="520" y="445" width="115" height="105"/><rect x="670" y="445" width="115" height="105"/><rect x="820" y="445" width="125" height="105"/><rect x="355" y="295" width="135" height="105"/><rect x="520" y="295" width="115" height="105"/><rect x="670" y="295" width="115" height="105"/><rect x="670" y="150" width="115" height="105"/><path d="M110,585 H1050 C1040,520 1030,430 1090,330 C1140,380 1180,440 1195,475 C1260,465 1320,480 1345,505 C1310,590 1230,630 1160,635 C1070,880 850,1040 540,1040 C250,1040 110,850 110,585 Z"/></g></svg>
<div class="t" style="left:599.20px;top:1722.03px;font-size:26.30px;color:#2f74d0;letter-spacing:1.138px;-webkit-text-stroke:0.6px #2f74d0;">tejakummarikuntla/easy-buggy-app</div>
<div class="t" style="left:1199.40px;top:1723.73px;font-size:26.30px;color:#383946;letter-spacing:0.400px;">Docker</div>
<div class="t" style="left:1670.00px;top:1723.73px;font-size:26.30px;color:#383946;letter-spacing:0.400px;">3</div>
<div class="t" style="left:2142.30px;top:1704.06px;font-size:25.80px;color:#4aafc0;letter-spacing:0.400px;">Prod: 0</div>
<div class="t" style="left:2142.30px;top:1744.06px;font-size:25.80px;color:#5026a8;letter-spacing:0.680px;">Pre-Prod: 0</div>
<div style="position:absolute;left:2614px;top:1737.6px;width:9px;height:2.6px;background:#4f5162"></div>
<div class="t" style="left:537.00px;top:1877.75px;font-size:24.86px;color:#0b0b0d;letter-spacing:0.480px;-webkit-text-stroke:0.35px #0b0b0d;">9 of 9</div>
<div style="position:absolute;left:1533px;top:1859px;width:451px;height:64px;background:#ffffff;border-radius:32px;box-shadow:0 1px 3px rgba(96,97,112,0.18), 0 0 1px rgba(40,41,61,0.08)"></div>
<div style="position:absolute;left:1707px;top:1859px;width:94px;height:64px;background:#3f8fdc"></div>
<svg style="position:absolute;left:1568px;top:1876px;" width="32" height="30" viewBox="0 0 32 30"><path d="M26,15 H8 M15,8 L8,15 L15,22" fill="none" stroke="#9293ab" stroke-width="2.4" stroke-linecap="round" stroke-linejoin="round"/></svg>
<div class="t" style="left:1606.00px;top:1875.38px;font-size:30.73px;color:#9293ab;letter-spacing:-1.667px;">Prev</div>
<div class="t" style="left:1748.00px;top:1875.38px;font-size:30.73px;color:#ffffff;">1</div>
<div class="t" style="left:1842.00px;top:1875.38px;font-size:30.73px;color:#9293ab;letter-spacing:-0.433px;">Next</div>
<svg style="position:absolute;left:1915px;top:1876px;" width="32" height="30" viewBox="0 0 32 30"><path d="M6,15 H24 M17,8 L24,15 L17,22" fill="none" stroke="#9293ab" stroke-width="2.4" stroke-linecap="round" stroke-linejoin="round"/></svg>
<div class="t" style="left:2932.00px;top:1874.70px;font-size:29.05px;color:#6b6d85;letter-spacing:-1.067px;">Show</div>
<div style="position:absolute;left:3020px;top:1859px;width:120px;height:64px;background:#fbfbfd;border:2px solid #d9dae5;border-radius:8px;box-sizing:border-box"></div>
<div class="t" style="left:3047.00px;top:1877.95px;font-size:24.86px;color:#0b0b0d;letter-spacing:0.500px;-webkit-text-stroke:0.35px #0b0b0d;">20</div>
<svg style="position:absolute;left:3094px;top:1882.5px;" width="24" height="16.5" viewBox="0 0 24 16.5"><path d="M4,4 L12.0,12.5 L20,4" fill="none" stroke="#6b6d85" stroke-width="1.8" stroke-linecap="round" stroke-linejoin="round"/></svg>
<div class="t" style="left:3157.30px;top:1874.40px;font-size:29.05px;color:#6b6d85;letter-spacing:0.271px;">per page</div>
</body></html>
